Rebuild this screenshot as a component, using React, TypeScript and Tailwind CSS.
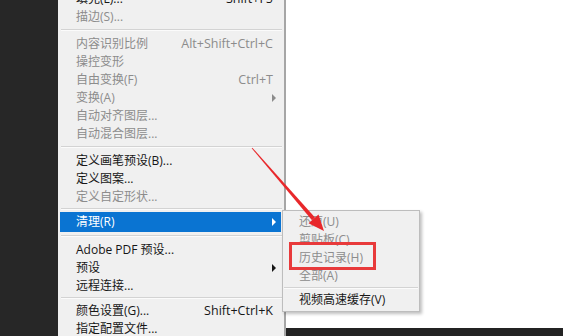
import React from "react";

type Item =
  | { type: "sep"; h: number; line: number }
  | {
      type: "item";
      label: string;
      shortcut?: string;
      disabled?: boolean;
      arrow?: boolean;
      active?: boolean;
      h?: number;
    };

const items: Item[] = [
  { type: "item", label: "填充(L)...", shortcut: "Shift+F5" },
  { type: "item", label: "描边(S)...", disabled: true },
  { type: "sep", h: 9, line: 3 },
  { type: "item", label: "内容识别比例", shortcut: "Alt+Shift+Ctrl+C", disabled: true },
  { type: "item", label: "操控变形", disabled: true },
  { type: "item", label: "自由变换(F)", shortcut: "Ctrl+T", disabled: true },
  { type: "item", label: "变换(A)", disabled: true, arrow: true },
  { type: "item", label: "自动对齐图层...", disabled: true },
  { type: "item", label: "自动混合图层...", disabled: true },
  { type: "sep", h: 9, line: 3 },
  { type: "item", label: "定义画笔预设(B)..." },
  { type: "item", label: "定义图案..." },
  { type: "item", label: "定义自定形状...", disabled: true },
  { type: "sep", h: 6, line: 2 },
  { type: "item", label: "清理(R)", arrow: true, active: true, h: 20 },
  { type: "sep", h: 9, line: 3 },
  { type: "item", label: "Adobe PDF 预设..." },
  { type: "item", label: "预设", arrow: true },
  { type: "item", label: "远程连接..." },
  { type: "sep", h: 7, line: 2 },
  { type: "item", label: "颜色设置(G)...", shortcut: "Shift+Ctrl+K" },
  { type: "item", label: "指定配置文件..." },
];

function Arrow({ color }: { color: string }) {
  return (
    <svg width="5" height="8" viewBox="0 0 5 8" className="-mr-[4px]">
      <polygon points="0,0 4,4 0,8" fill={color} />
    </svg>
  );
}

function Sep({ h, line, ml = 3, mr = 2 }: { h: number; line: number; ml?: number; mr?: number }) {
  return (
    <div style={{ height: h, paddingTop: line, marginLeft: ml, marginRight: mr }}>
      <div className="h-px bg-[#d3d3d3]" />
      <div className="h-px bg-[#fbfbfb]" />
    </div>
  );
}

export default function App() {
  return (
    <div
      className="relative w-[563px] h-[336px] overflow-hidden flex bg-[#262626] text-[12px]"
      style={{ fontFamily: '"Open Sans", "Noto Sans CJK SC", sans-serif' }}
    >
      <div className="w-[58px] shrink-0 bg-[#272727]" />
      <div className="w-[228px] shrink-0 h-full bg-[#f0f0f0] border-r-2 border-[#a6a6a6] overflow-hidden">
        <div className="-mt-[10px]">
          {items.map((it, i) => {
            if (it.type === "sep") return <Sep key={i} h={it.h} line={it.line} />;
            const h = it.h ?? 18;
            if (it.active) {
              return (
                <div
                  key={i}
                  className="ml-[2px] mr-[3px] flex items-center justify-between bg-[#0a74d2] text-white pl-[16px] pr-[8px]"
                  style={{ height: h }}
                >
                  <span>{it.label}</span>
                  <Arrow color="#ffffff" />
                </div>
              );
            }
            const color = it.disabled ? "text-[#8c8c8c]" : "text-[#161616]";
            return (
              <div
                key={i}
                className={`flex items-center justify-between pl-[18px] pr-[11px] ${color}`}
                style={{ height: h }}
              >
                <span>{it.label}</span>
                {it.shortcut && <span className="text-[12.5px]">{it.shortcut}</span>}
                {it.arrow && <Arrow color={it.disabled ? "#8c8c8c" : "#161616"} />}
              </div>
            );
          })}
        </div>
      </div>
      <div className="flex-1 flex flex-col">
        <div className="h-[328px] bg-white" />
        <div className="flex-1 bg-[#232323]" />
      </div>

      {/* submenu */}
      <div className="absolute left-[282px] top-[210px] w-[138px] h-[102px] bg-[#f0f0f0] border border-[#bdbdbd] shadow-[2px_2px_3px_rgba(0,0,0,0.25)] pt-[2px]">
        {["还原(U)", "剪贴板(C)", "历史记录(H)", "全部(A)"].map((t) => (
          <div key={t} className="h-[18px] flex items-center pl-[16px] text-[#8c8c8c]">
            {t}
          </div>
        ))}
        <Sep h={6} line={2} ml={1} mr={1} />
        <div className="h-[18px] flex items-center pl-[16px] text-[#161616]">视频高速缓存(V)</div>
      </div>

      {/* annotations */}
      <div className="absolute left-[289px] top-[242px] w-[87px] h-[28px] border-[3px] border-[#e83a3b]" />
      <svg className="absolute left-0 top-0" width="563" height="336" viewBox="0 0 563 336">
        <polygon
          points="252.3,147.7 251.7,148.3 312,220.3 315,217.5"
          fill="#e8282b"
        />
        <polygon points="324,231 308.5,223.2 318.5,214.6" fill="#e8282b" />
      </svg>
    </div>
  );
}
